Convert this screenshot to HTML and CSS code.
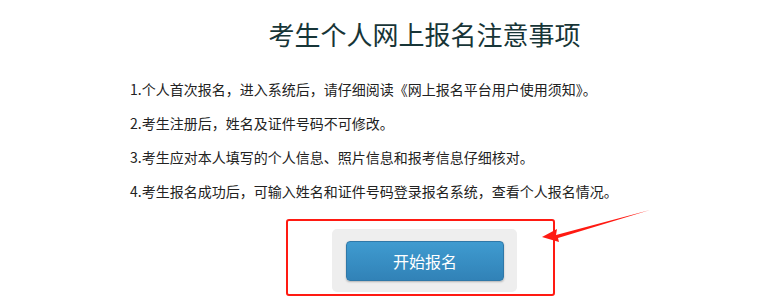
FILE: index.html
```html
<!DOCTYPE html>
<html lang="zh-CN">
<head>
<meta charset="utf-8">
<title>考生个人网上报名注意事项</title>
<link rel="stylesheet" href="styles.css">
</head>
<body>
<div class="page">
  <div class="content">
    <h1 class="title">考生个人网上报名注意事项</h1>
    <ol class="notes">
      <li>1.个人首次报名，进入系统后，请仔细阅读《网上报名平台用户使用须知》。</li>
      <li>2.考生注册后，姓名及证件号码不可修改。</li>
      <li>3.考生应对本人填写的个人信息、照片信息和报考信息仔细核对。</li>
      <li>4.考生报名成功后，可输入姓名和证件号码登录报名系统，查看个人报名情况。</li>
    </ol>
    <div class="action">
      <button class="start-btn" type="button">开始报名</button>
    </div>
  </div>
  <div class="mark-box"></div>
  <svg class="mark-arrow" width="120" height="40" viewBox="0 0 120 40">
    <path d="M118 1 L24 26 L25 20 L10 28 L27 33 L26 29 Z" fill="#ff1a12"/>
  </svg>
</div>
</body>
</html>
```
FILE: styles.css
```css
html, body {
  margin: 0;
  padding: 0;
  background: #fff;
}
body {
  font-family: "Microsoft YaHei", "Noto Sans CJK SC", "Noto Sans", sans-serif;
  color: #222;
}
.page {
  position: relative;
  width: 764px;
  height: 302px;
  overflow: hidden;
}
.content {
  margin-left: 130px;
  width: 589px;
  padding-top: 14px;
  display: flex;
  flex-direction: column;
}
.title {
  margin: 0;
  font-size: 26px;
  line-height: 40px;
  font-weight: normal;
  text-align: center;
  color: #173537;
}
.notes {
  list-style: none;
  margin: 18px 0 0 0;
  padding: 0;
  font-size: 14px;
  line-height: 34px;
  color: #222;
}
.action {
  align-self: center;
  margin-top: 21px;
  width: 185px;
  height: 63px;
  box-sizing: border-box;
  padding: 12px 0 0 14px;
  background: #eeeeee;
  border-radius: 5px;
}
.start-btn {
  display: block;
  width: 158px;
  height: 40px;
  margin: 0;
  padding: 0;
  border: 1px solid #2f78a8;
  border-radius: 4px;
  background: linear-gradient(#3f9bd0, #3182b7);
  box-shadow: 0 1px 2px rgba(0,0,0,0.25);
  color: #fff;
  font-family: "Microsoft YaHei", "Noto Sans CJK SC", sans-serif;
  font-size: 16px;
  cursor: pointer;
}
.mark-box {
  position: absolute;
  left: 286px;
  top: 219px;
  width: 269px;
  height: 77px;
  box-sizing: border-box;
  border: 2px solid #ff1a12;
  border-radius: 3px;
}
.mark-arrow {
  position: absolute;
  left: 532px;
  top: 209px;
}
```
